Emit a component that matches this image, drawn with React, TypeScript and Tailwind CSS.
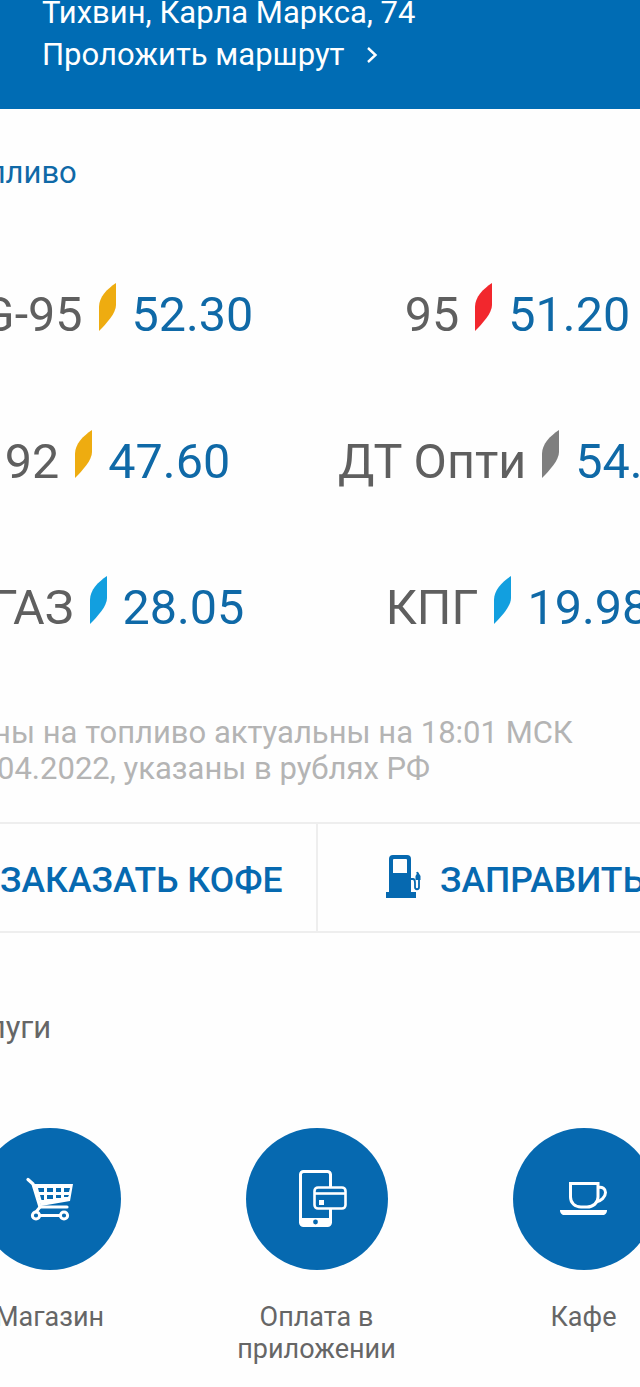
const Leaf = ({ color }: { color: string }) => (
  <svg width="17" height="48" viewBox="0 0 17 48" className="shrink-0 mb-[16px]">
    <path d="M17 0 L17 22 C17 30 8 40 0 48 L0 24 C0 14 8 6 17 0Z" fill={color} />
  </svg>
);

const fuels = [
  { name: "G-95", color: "#eeac10", price: "52.30" },
  { name: "95", color: "#f2272d", price: "51.20" },
  { name: "92", color: "#eeac10", price: "47.60" },
  { name: "ДТ Опти", color: "#7f7f7f", price: "54.50" },
  { name: "ГАЗ", color: "#129fdf", price: "28.05" },
  { name: "КПГ", color: "#129fdf", price: "19.98" },
];

const Pump = () => (
  <svg width="36" height="44" viewBox="0 0 36 44" className="shrink-0">
    <path
      fillRule="evenodd"
      d="M3 4 a4 4 0 0 1 4-4 H21 a4 4 0 0 1 4 4 V37 H30 V43 H0 V37 H3 Z M7 5 a1 1 0 0 1 1-1 H20 a1 1 0 0 1 1 1 V18 H7 Z"
      fill="#0669b0"
    />
    <path d="M25 24 H27 C29 24 29 26 29 28 V32 C29 35 33 35 33 32 V22 L31 17" fill="none" stroke="#0669b0" strokeWidth="1.8" />
    <path d="M29.5 21 L32 17 L34.5 21 V25 H29.5 Z" fill="#0669b0" />
  </svg>
);

const Cart = () => (
  <svg width="48" height="44" viewBox="0 0 48 44">
    <path d="M2 2.5 L7 7 L14 30 H41" fill="none" stroke="#fff" strokeWidth="3.2" strokeLinecap="round" />
    <path
      fillRule="evenodd"
      d="M8 7 H47 L44 24 L15 29 Z M12 11 L13 15 H18 V11 Z M21 11 V15 H27 V11 Z M30 11 V15 H35 V11 Z M38 11 V15 H43 L44 11 Z M14 18 L15.5 23 H18 V18 Z M21 18 V22 H27 V18 Z M30 18 V21 H35 V18 Z M38 18 V20 H42 L43 18 Z"
      fill="#fff"
    />
    <circle cx="10" cy="38.5" r="3.6" fill="none" stroke="#fff" strokeWidth="3" />
    <circle cx="38" cy="38.5" r="3.6" fill="none" stroke="#fff" strokeWidth="3" />
    <path d="M14 38.5 H34 M14 30 L10 35" stroke="#fff" strokeWidth="3" fill="none" />
  </svg>
);

const PhoneCard = () => (
  <svg width="48" height="57" viewBox="0 0 48 57" className="ml-[13px]">
    <path
      d="M31.5 17 V4.5 a3 3 0 0 0-3-3 H4.5 a3 3 0 0 0-3 3 V52.5 a3 3 0 0 0 3 3 H28.5 a3 3 0 0 0 3-3 V39"
      fill="none"
      stroke="#fff"
      strokeWidth="3"
    />
    <path d="M1.5 48 H31.5 V53 a3 3 0 0 1-3 3 H4.5 a3 3 0 0 1-3-3 Z" fill="#fff" />
    <circle cx="16.5" cy="52" r="2.4" fill="#0669b0" />
    <rect x="15.5" y="17.5" width="31" height="21" rx="3.5" fill="#0669b0" stroke="#fff" strokeWidth="2.6" />
    <path d="M15.5 23.5 H46.5" stroke="#fff" strokeWidth="2.6" />
    <rect x="20" y="30" width="5" height="5" fill="#fff" />
  </svg>
);

const Cup = () => (
  <svg width="47" height="33" viewBox="0 0 47 33">
    <path d="M10.5 1.5 H38 V15 C38 21 33 25 27 25 H21 C15 25 10.5 21 10.5 15 Z" fill="none" stroke="#fff" strokeWidth="3" />
    <path d="M38 5.5 C42.5 4.5 45.5 7 45.5 10.5 C45.5 15 41 19 36 20" fill="none" stroke="#fff" strokeWidth="3" />
    <path d="M0 28 H47 C47 31.5 45 33 43 33 H4 C2 33 0 31.5 0 28 Z" fill="#fff" />
  </svg>
);

const services = [
  { label: ["Магазин"], icon: <Cart /> },
  { label: ["Оплата в", "приложении"], icon: <PhoneCard /> },
  { label: ["Кафе"], icon: <Cup /> },
];

export default function App() {
  return (
    <div className="w-[640px] h-[1387px] overflow-hidden bg-[#fefefe] font-['Roboto',sans-serif]">
      <header className="h-[109px] bg-[#006cb4] overflow-hidden pl-[42px] text-white text-[31px] leading-[42px]">
        <div className="-mt-[8px]">Тихвин, Карла Маркса, 74</div>
        <div className="flex items-center gap-[22px]">
          <span>Проложить маршрут</span>
          <svg width="12" height="18" viewBox="0 0 12 18">
            <path d="M2 2 L9.5 9 L2 16" fill="none" stroke="#fff" strokeWidth="2.4" />
          </svg>
        </div>
      </header>

      <div className="-ml-[81px] w-[800px]">
        <div className="pl-[34px] pt-[46px] text-[31px] leading-[36px] text-[#0f69a7]">Топливо</div>

        <div className="grid grid-cols-[397px_403px] mt-[51px]">
          {fuels.map((f) => (
            <div key={f.name} className="h-[146.5px] flex items-center justify-center gap-[16px] text-[48.5px] leading-none">
              <span className="text-[#5f5f5f] whitespace-nowrap">{f.name}</span>
              <Leaf color={f.color} />
              <span className="text-[#0f69a7]">{f.price}</span>
            </div>
          ))}
        </div>

        <div className="pl-[35px] mt-[33px] text-[31px] leading-[36px] text-[#b4b4b4]">
          <div>Цены на топливо актуальны на 18:01 МСК</div>
          <div>07.04.2022, указаны в рублях РФ</div>
        </div>

        <div className="mt-[35px] grid grid-cols-[397px_1fr] h-[111px] border-y-2 border-[#eeeeee]">
          <div className="flex items-center text-[35.5px] font-medium text-[#0669b0]">
            <span className="ml-[81px] mt-[7px] whitespace-nowrap">ЗАКАЗАТЬ КОФЕ</span>
          </div>
          <div className="flex items-center gap-[18px] border-l-2 border-[#eeeeee] pl-[68px] text-[35.5px] font-medium text-[#0669b0]">
            <Pump />
            <span className="mt-[7px] whitespace-nowrap">ЗАПРАВИТЬ</span>
          </div>
        </div>

        <div className="pl-[34px] mt-[77px] text-[31px] leading-[36px] text-[#666666]">Услуги</div>

        <div className="grid grid-cols-3 w-[801px] -ml-[3px] mt-[82px]">
          {services.map((s) => (
            <div key={s.label[0]} className="flex flex-col items-center">
              <div className="w-[142px] h-[142px] rounded-full bg-[#0669b0] flex items-center justify-center">{s.icon}</div>
              <div className="mt-[31px] text-center text-[27px] leading-[32px] text-[#666666]">
                {s.label.map((l) => (
                  <div key={l}>{l}</div>
                ))}
              </div>
            </div>
          ))}
        </div>
      </div>
    </div>
  );
}
